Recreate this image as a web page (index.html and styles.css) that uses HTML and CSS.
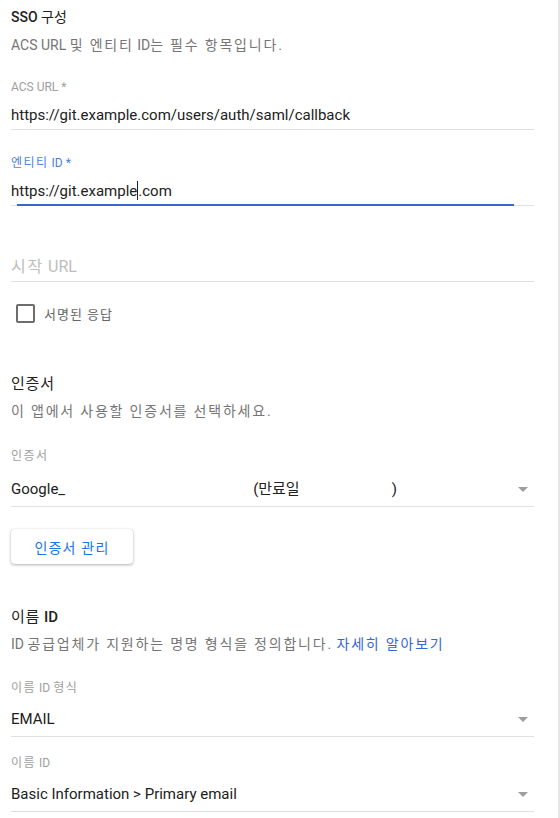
FILE: index.html
```html
<!DOCTYPE html>
<html lang="ko">
<head>
<meta charset="utf-8">
<link rel="stylesheet" href="styles.css">
</head>
<body>
<div class="page">
  <h2 class="title"><b>SSO</b> 구성</h2>
  <p class="desc">ACS URL <span class="ko">및 엔티티</span> ID<span class="ko">는 필수 항목입니다.</span></p>

  <div class="field f-acs">
    <div class="flabel">ACS URL *</div>
    <div class="fvalue">https://git.example.com/users/auth/saml/callback</div>
  </div>

  <div class="field f-entity">
    <div class="flabel focus"><span class="ko">엔티티</span> ID *</div>
    <div class="fvalue">https://git.example<span class="caret"></span>.com<span class="focusline"></span></div>
  </div>

  <div class="field f-start">
    <div class="fvalue placeholder"><span class="ko">시작</span> URL</div>
  </div>

  <div class="check">
    <span class="box"></span>
    <span class="check-label ko">서명된 응답</span>
  </div>

  <h2 class="title t-cert ko">인증서</h2>
  <p class="desc ko">이 앱에서 사용할 인증서를 선택하세요.</p>

  <div class="field f-certsel">
    <div class="flabel ko">인증서</div>
    <div class="fvalue select"><span class="sel-text">Google_<span class="redact r1"></span>(만료일<span class="redact r2"></span>)</span><span class="arrow"></span></div>
  </div>

  <button class="btn ko">인증서 관리</button>

  <h2 class="title t-name"><span class="ko">이름</span> <b>ID</b></h2>
  <p class="desc">ID <span class="ko">공급업체가 지원하는 명명 형식을 정의합니다.</span> <a class="link ko">자세히 알아보기</a></p>

  <div class="field f-fmt">
    <div class="flabel"><span class="ko">이름</span> ID <span class="ko">형식</span></div>
    <div class="fvalue select"><span class="sel-text">EMAIL</span><span class="arrow"></span></div>
  </div>

  <div class="field f-nameid">
    <div class="flabel"><span class="ko">이름</span> ID</div>
    <div class="fvalue select"><span class="sel-text">Basic Information &gt; Primary email</span><span class="arrow"></span></div>
  </div>
</div>
</body>
</html>
```

FILE: styles.css
```css
html, body {
  margin: 0;
  padding: 0;
  background: #fff;
}
body {
  font-family: Roboto, "Noto Sans CJK KR", "Noto Sans", sans-serif;
  color: #212121;
}
.page {
  width: 560px;
  height: 818px;
  padding: 7px 0 0 11px;
  box-sizing: border-box;
  border-right: 2px solid #e6e6e6;
  overflow: hidden;
}
.ko {
  letter-spacing: 1.2px;
}
.title {
  margin: 0;
  font-size: 14px;
  line-height: 20px;
  font-weight: 400;
  color: #212121;
}
.title b { font-weight: 500; }
.title.ko, .title .ko { letter-spacing: 0.8px; }
.desc {
  margin: 8px 0 0;
  font-size: 14px;
  line-height: 20px;
  color: #757575;
}
.desc .ko, .desc.ko { letter-spacing: 1.8px; }
.link {
  color: #3367d6;
  text-decoration: none;
}
.field {
  width: 523px;
  margin-top: 24px;
}
.f-acs { margin-top: 24px; }
.f-entity { margin-top: 25px; }
.f-start { margin-top: 49px; }
.f-certsel { margin-top: 27px; }
.f-fmt { margin-top: 26px; }
.f-nameid { margin-top: 18px; }
.flabel {
  font-size: 12px;
  line-height: 16px;
  color: #9e9e9e;
}
.flabel .ko, .flabel.ko { letter-spacing: 1.5px; }
.flabel.focus { color: #4a7fe0; }
.fvalue {
  position: relative;
  margin-top: 8px;
  font-size: 15px;
  line-height: 24px;
  padding-bottom: 2px;
  border-bottom: 1px solid #e0e0e0;
  color: #212121;
}
.placeholder {
  font-size: 16px;
  color: #bdbdbd;
}
.placeholder .ko { letter-spacing: 1.8px; }
.caret {
  display: inline-block;
  width: 1px;
  height: 19px;
  background: #212121;
  vertical-align: -4px;
}
.focusline {
  position: absolute;
  left: 6px;
  width: 497px;
  bottom: -1px;
  height: 2px;
  background: #3367d6;
}
.select {
  display: flex;
  align-items: center;
  justify-content: space-between;
  margin-top: 11px;
  padding-bottom: 5px;
}
.f-certsel .select { margin-top: 13px; }
.redact {
  display: inline-block;
  height: 1px;
}
.r1 { width: 188px; }
.r2 { width: 92px; }
.arrow {
  width: 0;
  height: 0;
  border-left: 5px solid transparent;
  border-right: 5px solid transparent;
  border-top: 5px solid #9e9e9e;
  margin-right: 6px;
}
.check {
  display: flex;
  align-items: center;
  gap: 9px;
  margin-top: 21px;
  height: 20px;
  padding-left: 5px;
}
.box {
  width: 15px;
  height: 15px;
  border: 2px solid #6d6d6d;
  border-radius: 2px;
}
.check-label {
  font-size: 13px;
  color: #666;
  letter-spacing: 1px;
}
.t-cert { margin-top: 51px; font-size: 15px; }
.t-cert + .desc { margin-top: 7px; }
.t-name { margin-top: 43px; font-size: 15px; }
.t-name + .desc { margin-top: 7px; }
.btn {
  display: block;
  margin-top: 22px;
  width: 122px;
  height: 35px;
  border: none;
  border-radius: 4px;
  background: #fff;
  box-shadow: 0 1px 3px rgba(0,0,0,0.3), 0 0 1px rgba(0,0,0,0.15);
  font-family: Roboto, "Noto Sans CJK KR", sans-serif;
  font-size: 14px;
  color: #1a73e8;
  padding: 0;
}
```
